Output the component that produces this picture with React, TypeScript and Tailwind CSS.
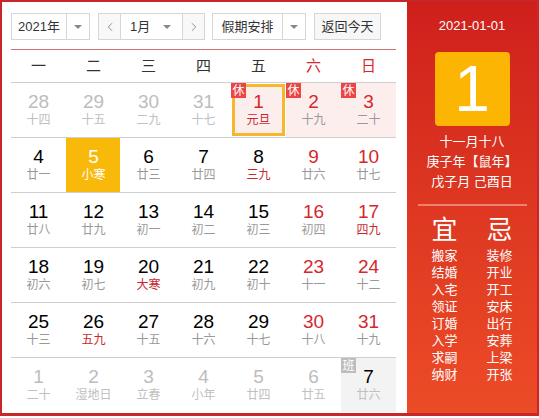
import { ChevronLeft, ChevronRight } from 'lucide-react'

type Day = {
  n: number
  l: string
  other?: boolean
  red?: boolean
  lred?: boolean
  rest?: boolean
  work?: boolean
  today?: boolean
  sel?: boolean
}

const rows: Day[][] = [
  [
    { n: 28, l: '十四', other: true },
    { n: 29, l: '十五', other: true },
    { n: 30, l: '二九', other: true },
    { n: 31, l: '十七', other: true },
    { n: 1, l: '元旦', red: true, lred: true, rest: true, today: true },
    { n: 2, l: '十九', red: true, rest: true },
    { n: 3, l: '二十', red: true, rest: true },
  ],
  [
    { n: 4, l: '廿一' },
    { n: 5, l: '小寒', sel: true },
    { n: 6, l: '廿三' },
    { n: 7, l: '廿四' },
    { n: 8, l: '三九', lred: true },
    { n: 9, l: '廿六', red: true },
    { n: 10, l: '廿七', red: true },
  ],
  [
    { n: 11, l: '廿八' },
    { n: 12, l: '廿九' },
    { n: 13, l: '初一' },
    { n: 14, l: '初二' },
    { n: 15, l: '初三' },
    { n: 16, l: '初四', red: true },
    { n: 17, l: '四九', red: true, lred: true },
  ],
  [
    { n: 18, l: '初六' },
    { n: 19, l: '初七' },
    { n: 20, l: '大寒', lred: true },
    { n: 21, l: '初九' },
    { n: 22, l: '初十' },
    { n: 23, l: '十一', red: true },
    { n: 24, l: '十二', red: true },
  ],
  [
    { n: 25, l: '十三' },
    { n: 26, l: '五九', lred: true },
    { n: 27, l: '十五' },
    { n: 28, l: '十六' },
    { n: 29, l: '十七' },
    { n: 30, l: '十八', red: true },
    { n: 31, l: '十九', red: true },
  ],
  [
    { n: 1, l: '二十', other: true },
    { n: 2, l: '湿地日', other: true },
    { n: 3, l: '立春', other: true },
    { n: 4, l: '小年', other: true },
    { n: 5, l: '廿四', other: true },
    { n: 6, l: '廿五', other: true },
    { n: 7, l: '廿六', work: true },
  ],
]

const yi = ['搬家', '结婚', '入宅', '领证', '订婚', '入学', '求嗣', '纳财']
const ji = ['装修', '开业', '开工', '安床', '出行', '安葬', '上梁', '开张']

function Caret() {
  return <span className="h-0 w-0 border-x-[4px] border-t-[4px] border-x-transparent border-t-[#888]" />
}

function Cell({ d }: { d: Day }) {
  let bg = ''
  if (d.rest) bg = 'bg-[#fdeeee]'
  if (d.work) bg = 'bg-[#f3f3f3]'
  if (d.sel) bg = 'bg-[#f9b90b]'

  let num = 'text-black'
  if (d.red) num = 'text-[#d5272d]'
  if (d.other) num = 'text-[#bdbdbd]'
  if (d.sel) num = 'text-white'

  let lun = 'text-[#999]'
  if (d.lred) lun = 'text-[#c8282e]'
  if (d.other || d.work) lun = 'text-[#c0c0c0]'
  if (d.sel) lun = 'text-white'

  return (
    <div className="relative h-[54px]">
      <div
        className={`absolute inset-0 ${d.sel ? 'right-px' : ''} ${bg} ${
          d.today ? 'm-px border-[3px] border-[#f6b72b]' : ''
        }`}
      />
      {d.rest && (
        <span className="absolute left-0 top-0 flex h-[15px] w-[15px] items-center justify-center bg-[#ec4545] text-[12px] leading-none text-white">
          休
        </span>
      )}
      {d.work && (
        <span className="absolute left-0 top-0 flex h-[15px] w-[15px] items-center justify-center bg-[#bdbdbd] text-[12px] leading-none text-white">
          班
        </span>
      )}
      <div className="relative flex h-full flex-col items-center pt-[8px]">
        <span className={`text-[19px] leading-[22px] ${num}`}>{d.n}</span>
        <span className={`mt-[-1px] text-[12px] leading-[16px] ${lun}`}>{d.l}</span>
      </div>
    </div>
  )
}

export default function App() {
  return (
    <div
      className="flex h-[416px] w-[539px] border-2 border-b-[3px] border-[#c8272a] bg-white"
      style={{ fontFamily: '"Liberation Sans", Arial, "Noto Sans CJK SC", sans-serif' }}
    >
      {/* 左侧日历 */}
      <div className="w-[405px] pl-[9px] pr-[9px] pt-[11px]">
        <div className="flex h-[27px] items-stretch text-[13px] text-[#333]">
          <div className="flex w-[79px] border border-[#d6d6d6]">
            <span className="flex flex-1 items-center justify-center">2021年</span>
            <span className="flex w-[23px] items-center justify-center border-l border-[#d6d6d6]">
              <Caret />
            </span>
          </div>
          <div className="ml-[8px] flex w-[107px] border border-[#d6d6d6]">
            <span className="flex w-[22px] items-center justify-center border-r border-[#d6d6d6] bg-[#f8f8f8] text-[#777]">
              <ChevronLeft size={14} strokeWidth={1.4} />
            </span>
            <span className="flex flex-1 items-center justify-between pl-[9px] pr-[11px]">
              1月
              <Caret />
            </span>
            <span className="flex w-[22px] items-center justify-center border-l border-[#d6d6d6] bg-[#f8f8f8] text-[#777]">
              <ChevronRight size={14} strokeWidth={1.4} />
            </span>
          </div>
          <div className="ml-[7px] flex w-[94px] border border-[#d6d6d6]">
            <span className="flex flex-1 items-center justify-center">假期安排</span>
            <span className="flex w-[23px] items-center justify-center border-l border-[#d6d6d6]">
              <Caret />
            </span>
          </div>
          <div className="ml-[8px] flex w-[67px] items-center justify-center border border-[#d6d6d6] bg-[#f7f7f7]">
            返回今天
          </div>
        </div>

        <div className="mt-[9px] w-[385px] border-t border-[#d0716f]" />
        <div className="grid h-[33px] w-[385px] grid-cols-7 border-b border-[#cfcfcf] text-[15px]">
          {['一', '二', '三', '四', '五', '六', '日'].map((w, i) => (
            <span
              key={w}
              className={`flex items-center justify-center ${i > 4 ? 'text-[#d5272d]' : 'text-[#333]'}`}
            >
              {w}
            </span>
          ))}
        </div>

        <div className="w-[385px]">
          {rows.map((r, i) => (
            <div key={i} className={`grid grid-cols-7 ${i > 0 ? 'border-t border-[#cfcfcf]' : ''}`}>
              {r.map((d, j) => (
                <Cell key={j} d={d} />
              ))}
            </div>
          ))}
        </div>
      </div>

      {/* 右侧详情 */}
      <div className="flex flex-1 flex-col items-center bg-linear-to-b from-[#cf1f1c] to-[#ec4b27] text-white">
        <div className="mt-[16px] text-[13px] leading-[16px]">2021-01-01</div>
        <div className="mt-[18px] flex h-[74px] w-[75px] items-center justify-center rounded-[4px] bg-[#fcb502] text-[64px] leading-none">
          1
        </div>
        <div className="mt-[6px] flex flex-col items-center text-[13px] leading-[20px]">
          <span>十一月十八</span>
          <span>庚子年【鼠年】</span>
          <span>戊子月 己酉日</span>
        </div>
        <div className="mt-[12px] w-[109px] border-t-2 border-[#f08070]" />
        <div className="mt-[8px] flex w-[110px]">
          <div className="flex w-[55px] flex-col items-center">
            <span className="text-[26px] leading-[32px]">宜</span>
            <div className="mt-[1px] flex flex-col items-center text-[13px] leading-[17px]">
              {yi.map((t) => (
                <span key={t}>{t}</span>
              ))}
            </div>
          </div>
          <div className="flex w-[55px] flex-col items-center">
            <span className="text-[26px] leading-[32px]">忌</span>
            <div className="mt-[1px] flex flex-col items-center text-[13px] leading-[17px]">
              {ji.map((t) => (
                <span key={t}>{t}</span>
              ))}
            </div>
          </div>
        </div>
      </div>
    </div>
  )
}
